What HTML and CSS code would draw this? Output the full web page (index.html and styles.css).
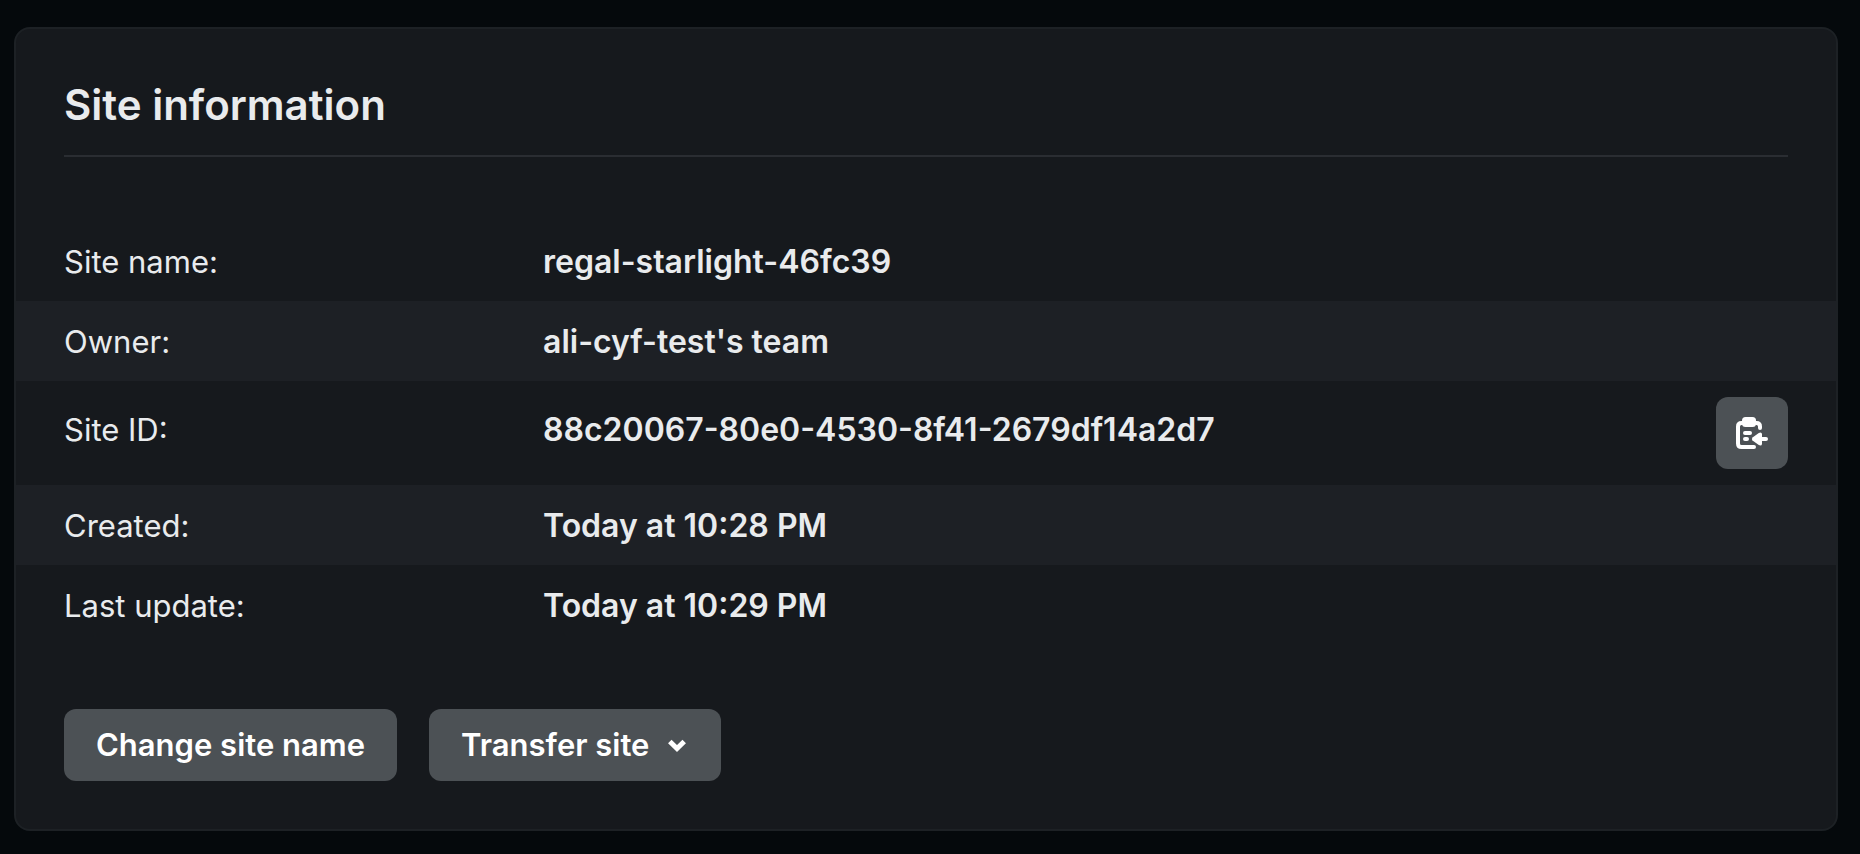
FILE: index.html
```html
<!DOCTYPE html>
<html lang="en">
<head>
<meta charset="utf-8">
<meta name="viewport" content="width=device-width, initial-scale=1">
<title>Site information</title>
<link rel="stylesheet" href="styles.css">
</head>
<body>
<main class="card">
  <header class="card-header">
    <h2 class="card-title">Site information</h2>
  </header>
  <dl class="info-list">
    <div class="info-row">
      <dt class="info-label">Site name:</dt>
      <dd class="info-value">regal-starlight-46fc39</dd>
    </div>
    <div class="info-row">
      <dt class="info-label">Owner:</dt>
      <dd class="info-value">ali-cyf-test's team</dd>
    </div>
    <div class="info-row info-row-action">
      <dt class="info-label">Site ID:</dt>
      <dd class="info-value">88c20067-80e0-4530-8f41-2679df14a2d7</dd>
      <dd class="info-action">
        <button class="button button-icon" type="button" aria-label="Copy to clipboard">
          <svg class="icon-copy" viewBox="0 0 32 32" aria-hidden="true">
            <path class="stroke" d="M6 6H5.500Q2 6 2 9.500V26.500Q2 30 5.500 30H18M20 6H20.500Q24 6 24 9.500V11"/>
            <rect class="fill" x="6" y="0" width="14" height="10" rx="3.500"/>
            <path class="stroke" d="M9 16H14M9 22H11M23 22H30"/>
            <path class="fill" d="M16.500 20.600L22.800 15.900Q25.600 14.600 26 17V27Q25.600 29.400 22.800 28.100L16.500 23.400Q15.200 22 16.500 20.600Z"/>
          </svg>
        </button>
      </dd>
    </div>
    <div class="info-row">
      <dt class="info-label">Created:</dt>
      <dd class="info-value">Today at 10:28 PM</dd>
    </div>
    <div class="info-row">
      <dt class="info-label">Last update:</dt>
      <dd class="info-value">Today at 10:29 PM</dd>
    </div>
  </dl>
  <div class="button-group">
    <button class="button" type="button">Change site name</button>
    <button class="button" type="button" aria-haspopup="true">Transfer site
      <svg class="icon-chevron" viewBox="0 0 24 24" aria-hidden="true"><path d="M4.800 8.500L12 15.500L19.200 8.500"/></svg>
    </button>
  </div>
</main>
</body>
</html>
```
FILE: styles.css
```css
* {
  box-sizing: border-box;
}

body {
  margin: 0;
  padding: 27px 22px 23px 14px;
  background: #05090c;
  color: #e9ebed;
  font-family: Inter, "Liberation Sans", sans-serif;
  font-size: 31px;
  line-height: 50px;
  -webkit-font-smoothing: antialiased;
}

.card {
  padding: 48px 0;
  border: 2px solid #1d2125;
  border-radius: 16px;
  background: #16191d;
}

.card-header {
  margin: 0 48px 64px;
  padding-bottom: 22px;
  border-bottom: 2px solid #2a2d32;
}

.card-title {
  margin: 0;
  font-size: 42px;
  font-weight: 600;
  line-height: 56px;
}

.info-list {
  margin: 0 0 64px;
}

.info-row {
  display: grid;
  grid-template-columns: 479px 1fr auto;
  padding: 16px 48px 14px;
}

.info-row:nth-child(even) {
  background: #1d2025;
}

.info-row-action {
  padding-bottom: 16px;
}

.info-row-action .info-label,
.info-row-action .info-value {
  padding-top: 8px;
}

.info-value,
.info-action {
  margin: 0;
}

.info-value {
  font-size: 32px;
  font-weight: 600;
}

.info-action {
  display: flex;
}

.button-group {
  display: flex;
  gap: 32px;
  padding: 0 48px;
}

.button {
  display: flex;
  align-items: center;
  gap: 16px;
  min-height: 72px;
  padding: 11px 32px;
  border: 0;
  border-radius: 12px;
  background: #4c5155;
  color: #fff;
  font: inherit;
  font-weight: 600;
  cursor: pointer;
}

.button-icon {
  justify-content: center;
  padding: 20px;
}

.icon-copy {
  width: 32px;
  height: 32px;
}

.icon-copy .stroke {
  fill: none;
  stroke: #fff;
  stroke-width: 4;
  stroke-linecap: round;
}

.icon-copy .fill {
  fill: #fff;
}

.icon-chevron {
  width: 24px;
  height: 24px;
  fill: none;
  stroke: #fff;
  stroke-width: 5;
}
```
